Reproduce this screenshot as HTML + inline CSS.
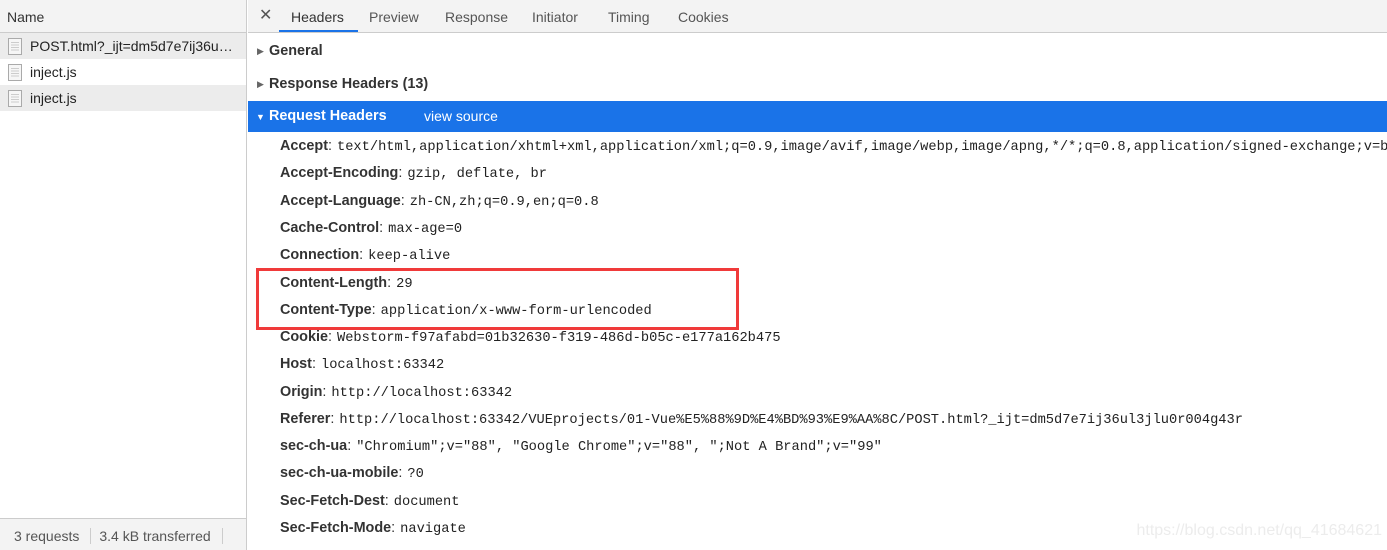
<!DOCTYPE html>
<html><head><meta charset="utf-8"><style>
*{margin:0;padding:0;box-sizing:border-box}
body{width:1387px;height:550px;overflow:hidden;background:#fff;font-family:"Segoe UI","Liberation Sans",sans-serif;position:relative;color:#333}
.left{position:absolute;left:0;top:0;width:247px;height:550px;border-right:1px solid #ccc;background:#fff}
.lh{height:33px;background:#f3f3f3;border-bottom:1px solid #ccc;font-size:14px;color:#333;padding:9px 0 0 7px}
.row{height:26px;font-size:14px;color:#222;padding:5px 0 0 30px;position:relative;white-space:nowrap;overflow:hidden}
.row.g{background:#ececec}
.ic{position:absolute;left:8px;top:5px;width:14px;height:17px;border:1px solid #aaa;background:#f6f6f6}
.ic:before{content:"";position:absolute;left:2px;top:3px;width:8px;height:9px;background:repeating-linear-gradient(#ccc 0 1px,transparent 1px 2.5px)}
.foot{position:absolute;left:0;top:518px;width:246px;height:32px;background:#f3f3f3;border-top:1px solid #ccc;font-size:14px;color:#555;padding:9px 0 0 14px;white-space:nowrap}
.foot span{border-right:1px solid #ccc;padding-right:11px;margin-right:8px}
.right{position:absolute;left:248px;top:0;right:0;height:550px}
.tabs{height:33px;background:#f3f3f3;border-bottom:1px solid #ccc;font-size:14px;color:#555;position:relative}
.tabs span{position:absolute;top:9px}
.sec{font-size:14.4px;font-weight:bold;color:#333;position:absolute;left:21px}
.tri{position:absolute;left:9px;font-size:9px;color:#666}
.blue{position:absolute;left:0;right:0;top:101px;height:31px;background:#1a73e8;color:#fff}
.kv{position:absolute;left:32px;font-size:14.4px;white-space:nowrap}
.kv b{color:#333}
.kv b em{font-style:normal;font-weight:normal}
.kv i{font-style:normal;font-family:"Liberation Mono",monospace;font-size:13.7px;color:#222;margin-left:5px}
.box{position:absolute;left:256px;top:268px;width:483px;height:62px;border:3px solid #f03a3a}
.wm{position:absolute;right:5px;top:522px;font-size:16px;color:#ececec;font-family:"Liberation Sans",sans-serif}
</style></head><body>
<div class="left">
<div class="lh">Name</div>
<div class="row g"><div class="ic"></div>POST.html?_ijt=dm5d7e7ij36u…</div>
<div class="row"><div class="ic"></div>inject.js</div>
<div class="row g"><div class="ic"></div>inject.js</div>
</div>
<div class="foot"><span>3 requests</span>3.4 kB transferred<span style="border:none;border-left:1px solid #ccc;margin-left:11px;padding:0"></span></div>
<div class="right">
<div class="tabs">
<span style="left:11px;top:5px;font-size:16px;color:#555">✕</span>
<span style="left:43px;color:#333">Headers</span>
<div style="position:absolute;left:31px;width:79px;top:30px;height:2px;background:#1a73e8"></div>
<span style="left:121px">Preview</span>
<span style="left:197px">Response</span>
<span style="left:284px">Initiator</span>
<span style="left:360px">Timing</span>
<span style="left:430px">Cookies</span>
</div>
<span class="tri" style="top:46px">▶</span><div class="sec" style="top:43px">General</div>
<span class="tri" style="top:79px">▶</span><div class="sec" style="top:76px">Response Headers (13)</div>
<div class="blue"><span class="tri" style="top:11px;color:#fff;left:8px">▼</span><div class="sec" style="top:7px;color:#fff">Request Headers</div><span style="position:absolute;left:176px;top:7px;font-size:14px">view source</span></div>
<div class="kv" style="top:138px"><b>Accept<em>:</em></b><i>text/html,application/xhtml+xml,application/xml;q=0.9,image/avif,image/webp,image/apng,*/*;q=0.8,application/signed-exchange;v=b3;q=0.9</i></div>
<div class="kv" style="top:165px"><b>Accept-Encoding<em>:</em></b><i>gzip, deflate, br</i></div>
<div class="kv" style="top:193px"><b>Accept-Language<em>:</em></b><i>zh-CN,zh;q=0.9,en;q=0.8</i></div>
<div class="kv" style="top:220px"><b>Cache-Control<em>:</em></b><i>max-age=0</i></div>
<div class="kv" style="top:247px"><b>Connection<em>:</em></b><i>keep-alive</i></div>
<div class="kv" style="top:275px"><b>Content-Length<em>:</em></b><i>29</i></div>
<div class="kv" style="top:302px"><b>Content-Type<em>:</em></b><i>application/x-www-form-urlencoded</i></div>
<div class="kv" style="top:329px"><b>Cookie<em>:</em></b><i>Webstorm-f97afabd=01b32630-f319-486d-b05c-e177a162b475</i></div>
<div class="kv" style="top:356px"><b>Host<em>:</em></b><i>localhost:63342</i></div>
<div class="kv" style="top:384px"><b>Origin<em>:</em></b><i>http://localhost:63342</i></div>
<div class="kv" style="top:411px"><b>Referer<em>:</em></b><i>http://localhost:63342/VUEprojects/01-Vue%E5%88%9D%E4%BD%93%E9%AA%8C/POST.html?_ijt=dm5d7e7ij36ul3jlu0r004g43r</i></div>
<div class="kv" style="top:438px"><b>sec-ch-ua<em>:</em></b><i>"Chromium";v="88", "Google Chrome";v="88", ";Not A Brand";v="99"</i></div>
<div class="kv" style="top:465px"><b>sec-ch-ua-mobile<em>:</em></b><i>?0</i></div>
<div class="kv" style="top:493px"><b>Sec-Fetch-Dest<em>:</em></b><i>document</i></div>
<div class="kv" style="top:520px"><b>Sec-Fetch-Mode<em>:</em></b><i>navigate</i></div>
</div>
<div class="box"></div>
<div class="wm">https://blog.csdn.net/qq_41684621</div>
</body></html>
